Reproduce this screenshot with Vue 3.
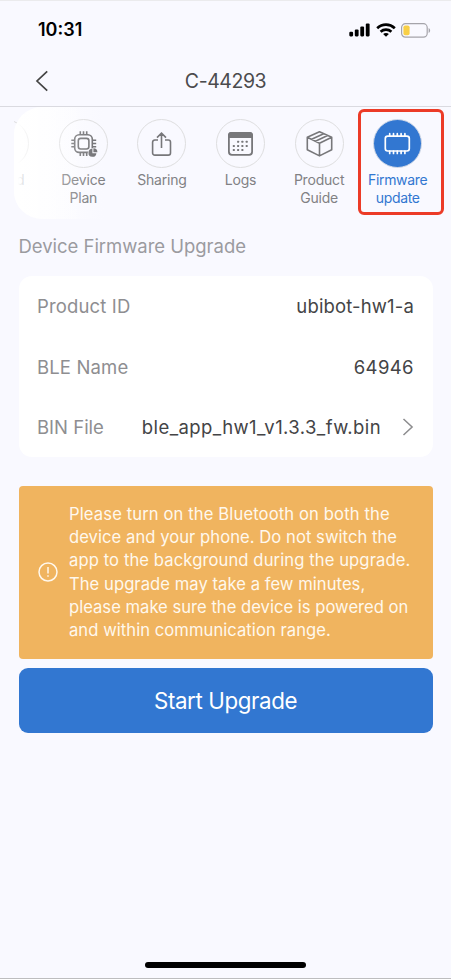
<script setup>
const tabs = [
  { id: 'prev', lines: ['d'] },
  { id: 'plan', lines: ['Device', 'Plan'] },
  { id: 'share', lines: ['Sharing'] },
  { id: 'logs', lines: ['Logs'] },
  { id: 'guide', lines: ['Product', 'Guide'] },
  { id: 'firmware', lines: ['Firmware', 'update'], active: true },
]
const notice = [
  'Please turn on the Bluetooth on both the',
  'device and your phone. Do not switch the',
  'app to the background during the upgrade.',
  'The upgrade may take a few minutes,',
  'please make sure the device is powered on',
  'and within communication range.',
]
const dots = [[21, 18], [25.3, 18], [29.6, 18], [16.7, 22.2], [21, 22.2], [25.3, 22.2], [29.6, 22.2], [16.7, 26.4], [21, 26.4], [25.3, 26.4]]
</script>

<template>
  <div class="screen">
    <div class="status">
      <span class="time">10:31</span>
      <div class="signals">
        <svg width="21" height="14" viewBox="0 0 21 14">
          <rect x="0.3" y="8.8" width="3.8" height="4.6" rx="1.1" />
          <rect x="5.8" y="6.4" width="3.8" height="7" rx="1.1" />
          <rect x="11.3" y="3.5" width="3.8" height="9.9" rx="1.1" />
          <rect x="16.8" y="0.4" width="3.8" height="13" rx="1.1" />
        </svg>
        <svg class="wifi" width="20" height="14" viewBox="0 0 20 14">
          <g fill="none" stroke="#000" stroke-width="2.7">
            <path d="M1.2 5.2C6.2.5 13.8.5 18.8 5.2" />
            <path d="M4.6 8.8c3.1-2.8 7.7-2.8 10.8 0" />
          </g>
          <path d="M7.1 11c1.6-1.4 4.2-1.4 5.8 0L10 13.8z" />
        </svg>
        <svg class="battery" width="30" height="15" viewBox="0 0 30 15">
          <rect x=".6" y=".7" width="25.6" height="13.4" rx="3.8" fill="none" stroke="#a5a4aa" stroke-width="1.2" />
          <rect x="2.4" y="2.5" width="6.2" height="9.8" rx="1.8" fill="#f8cf46" />
          <path d="M27.6 5c2 .7 2 4.2 0 4.9z" fill="#a5a4aa" />
        </svg>
      </div>
    </div>

    <header class="bar">
      <svg class="back" width="14" height="22" viewBox="0 0 14 22">
        <path d="M12.2 1.3 2 11l10.2 9.7" fill="none" stroke="#444" stroke-width="1.7" />
      </svg>
      <h1>C-44293</h1>
    </header>

    <nav class="tabs">
      <div v-for="t in tabs" :key="t.id" class="tab" :class="[t.id, { active: t.active }]">
        <div class="disc">
          <svg v-if="t.id === 'plan'" width="49" height="49" viewBox="0 0 49 49" fill="none" stroke="#77777a" stroke-width="1.6">
            <rect x="15.7" y="15.8" width="17.6" height="17.6" rx="4.4" />
            <rect x="19.3" y="19.4" width="10.6" height="10.6" rx="2.4" />
            <path d="M21.3 15.5v-3.2M24.5 15.5v-3.2M27.7 15.5v-3.2M21.3 33.7v3.2M24.5 33.7v3.2M27.7 33.7v3.2M15.5 21.3h-3.2M15.5 24.5h-3.2M15.5 27.7h-3.2M33.5 21.3h3.7M33.5 24.5h3.7M33.5 27.7h3.7" />
            <circle cx="33.4" cy="33.8" r="4.6" fill="#f9f9ff" stroke="none" />
            <path d="M33.4 29.8a4 4 0 1 0 4 4.4h-4zM34.4 29.2v4H38.4a4 4 0 0 0-4-4z" fill="#77777a" stroke="none" />
          </svg>
          <svg v-else-if="t.id === 'share'" width="49" height="49" viewBox="0 0 49 49" fill="none" stroke="#77777a" stroke-width="1.6">
            <path d="M21 21h-3.2a2.2 2.2 0 0 0-2.2 2.2v10.7a2.2 2.2 0 0 0 2.2 2.2h13.5a2.2 2.2 0 0 0 2.2-2.2V23.2a2.2 2.2 0 0 0-2.2-2.2H28M24.5 29V14.2M20 18.6l4.5-4.5 4.5 4.5" />
          </svg>
          <svg v-else-if="t.id === 'logs'" width="49" height="49" viewBox="0 0 49 49">
            <rect x="12.9" y="13.8" width="23.2" height="22" rx="3" fill="none" stroke="#77777a" stroke-width="1.8" />
            <path d="M12 19v-2.7a3.4 3.4 0 0 1 3.4-3.4h18.2a3.4 3.4 0 0 1 3.4 3.4V19z" fill="#77777a" />
            <rect v-for="(d, i) in dots" :key="i" :x="d[0] + .1" :y="d[1] + 3.7" width="2" height="2" rx=".5" fill="#77777a" />
          </svg>
          <svg v-else-if="t.id === 'guide'" width="49" height="49" viewBox="0 0 49 49" fill="none" stroke="#77777a" stroke-width="1.6" stroke-linejoin="round">
            <path d="m24.5 12.8 12.2 5.4v12.6l-12.2 6.1-12.2-6.1V18.2zM12.3 18.2l12.2 6.1 12.2-6.1M24.5 24.3v12.4M16.6 20.3l12.1-5.6M20.4 22.2l12.2-5.7" />
          </svg>
          <svg v-else-if="t.active" width="49" height="49" viewBox="0 0 49 49" fill="none" stroke="#fff" stroke-width="1.7" stroke-linecap="round">
            <rect x="12.3" y="17.2" width="24" height="14.8" rx="2.4" />
            <path d="M16.7 17v-2.3M20.5 17v-2.3M24.3 17v-2.3M28.1 17v-2.3M31.9 17v-2.3M16.7 32.2v2.3M20.5 32.2v2.3M24.3 32.2v2.3M28.1 32.2v2.3M31.9 32.2v2.3" />
          </svg>
        </div>
        <span v-for="l in t.lines" :key="l" class="label">{{ l }}</span>
      </div>
      <div class="fade"></div>
      <div class="highlight"></div>
    </nav>

    <main>
      <h2><span>Device Firmware Upgrade</span></h2>
      <section class="card">
        <div class="row"><span class="key k1">Product ID</span><span class="v1">ubibot-hw1-a</span></div>
        <div class="row"><span class="key k2">BLE Name</span><span class="v2">64946</span></div>
        <div class="row">
          <span class="key k3">BIN File</span>
          <span class="v3">ble_app_hw1_v1.3.3_fw.bin</span>
          <svg class="more" width="12" height="18" viewBox="0 0 12 18">
            <path d="m1.5 1 8.6 8-8.6 8" fill="none" stroke="#8c8c8e" stroke-width="1.5" />
          </svg>
        </div>
      </section>
      <section class="notice">
        <svg width="20" height="20" viewBox="0 0 20 20">
          <circle cx="10" cy="10" r="9" fill="none" stroke="#fff8ed" stroke-width="1.5" />
          <path d="M10 5v6.5M10 13.2v1.6" stroke="#fff8ed" stroke-width="1.5" />
        </svg>
        <p><span v-for="(l, i) in notice" :key="l" :class="'n' + i">{{ l }}</span></p>
      </section>
      <button class="start"><span>Start Upgrade</span></button>
    </main>
    <div class="home"></div>
  </div>
</template>

<style>
body { background: #f9f9ff; }
</style>

<style scoped>
.screen {
  box-sizing: border-box;
  width: 451px;
  height: 979px;
  display: flex;
  flex-direction: column;
  overflow: hidden;
  background: #f9f9ff;
  border-top: 1px solid #ebebed;
  border-bottom: 1px solid #bdbdbf;
  font-family: Inter, "Liberation Sans", sans-serif;
  color: #444;
}
.status { height: 55px; flex: none; display: flex; justify-content: space-between; padding: 0 20px 0 38px; }
.time { margin-top: 18px; font-size: 18px; line-height: 22px; font-weight: 600; color: #000; letter-spacing: 0; }
.signals { display: flex; align-items: flex-start; padding-top: 22px; }
.wifi { margin-left: 6px; }
.battery { margin-left: 5px; }
.bar { height: 50px; flex: none; display: flex; align-items: center; border-bottom: 1px solid #dadae0; }
.back { margin-left: 34.5px; }
h1 { flex: 1; margin: 0 45px 0 -3.5px; text-align: center; font-size: 19.5px; line-height: 24px; font-weight: 400; color: #4b4b4d; letter-spacing: -.45px; }
.tabs {
  position: relative;
  flex: none;
  height: 112px;
  margin: 0 14px;
  padding-top: 12.4px;
  box-sizing: border-box;
  display: flex;
  border-radius: 28px;
  background: linear-gradient(90deg, #fff 0, #f9f9ff 90px);
}
.tab { flex: none; width: 78.6px; display: flex; flex-direction: column; align-items: center; }
.prev { width: 30px; overflow: hidden; align-items: flex-start; }
.prev .disc { margin-left: -34.5px; }
.prev .label { margin-left: 2px; }
.disc { box-sizing: border-box; flex: none; width: 49px; height: 49px; border: 1px solid #dededf; border-radius: 50%; margin-bottom: 2.6px; }
.disc svg { display: block; margin: -1px; }
.active .disc { background: #3277d1; border-color: #d4dbe8; }
.label { font-size: 14px; line-height: 18.4px; color: #818184; letter-spacing: -.2px; white-space: nowrap; }
.active .label { color: #3277d1; letter-spacing: -.32px; }
.fade { position: absolute; left: 0; top: 0; width: 80px; height: 100%; border-radius: 28px 0 0 28px; background: linear-gradient(90deg, #fff 0, #fff 4px, rgba(255,255,255,.65) 12px, rgba(255,255,255,.3) 40px, rgba(255,255,255,0) 80px); }
.highlight { position: absolute; box-sizing: border-box; left: 344px; top: 2px; width: 86px; height: 106px; border: 3px solid #ec3b27; border-radius: 6px; }
main { padding: 0 18.5px; }
h2 { margin: 16px 0 0; font-size: 18.5px; line-height: 22px; font-weight: 400; color: #9b9b9f; white-space: nowrap; letter-spacing: -.03px; }
.card { margin-top: 19px; height: 181px; border-radius: 13px; background: #fff; padding: 0 18.5px; }
.row { height: 60.4px; display: flex; align-items: center; justify-content: space-between; font-size: 18.5px; color: #444446; white-space: nowrap; }
.key { color: #8e8e91; }
.k1, .k2 { letter-spacing: .15px; }
.v1 { letter-spacing: .15px; }
.v2 { letter-spacing: .4px; }
.v3 { margin-left: auto; letter-spacing: .4px; }
.more { margin-left: 21px; }
.notice { height: 173px; margin-top: 28.5px; border-radius: 4px; background: #f0b45f; display: flex; align-items: center; padding-left: 19.5px; box-sizing: border-box; }
.notice p { margin: 1px 0 0 11px; white-space: nowrap; }
.notice p span { display: block; font-size: 16.6px; line-height: 23.2px; color: #fff8ed; letter-spacing: .05px; }
.notice .n0 { letter-spacing: .12px; }
.notice .n2 { letter-spacing: .1px; }
.notice .n4 { letter-spacing: .01px; }
.start { display: block; width: 100%; height: 65px; margin-top: 9.5px; padding: 0; border: 0; border-radius: 9px; background: #3277d1; color: #fff; font-family: inherit; font-size: 22.3px; letter-spacing: -.38px; }
.home { width: 161px; height: 6px; border-radius: 3px; background: #000; margin: auto auto 10px 145px; flex: none; }
</style>
